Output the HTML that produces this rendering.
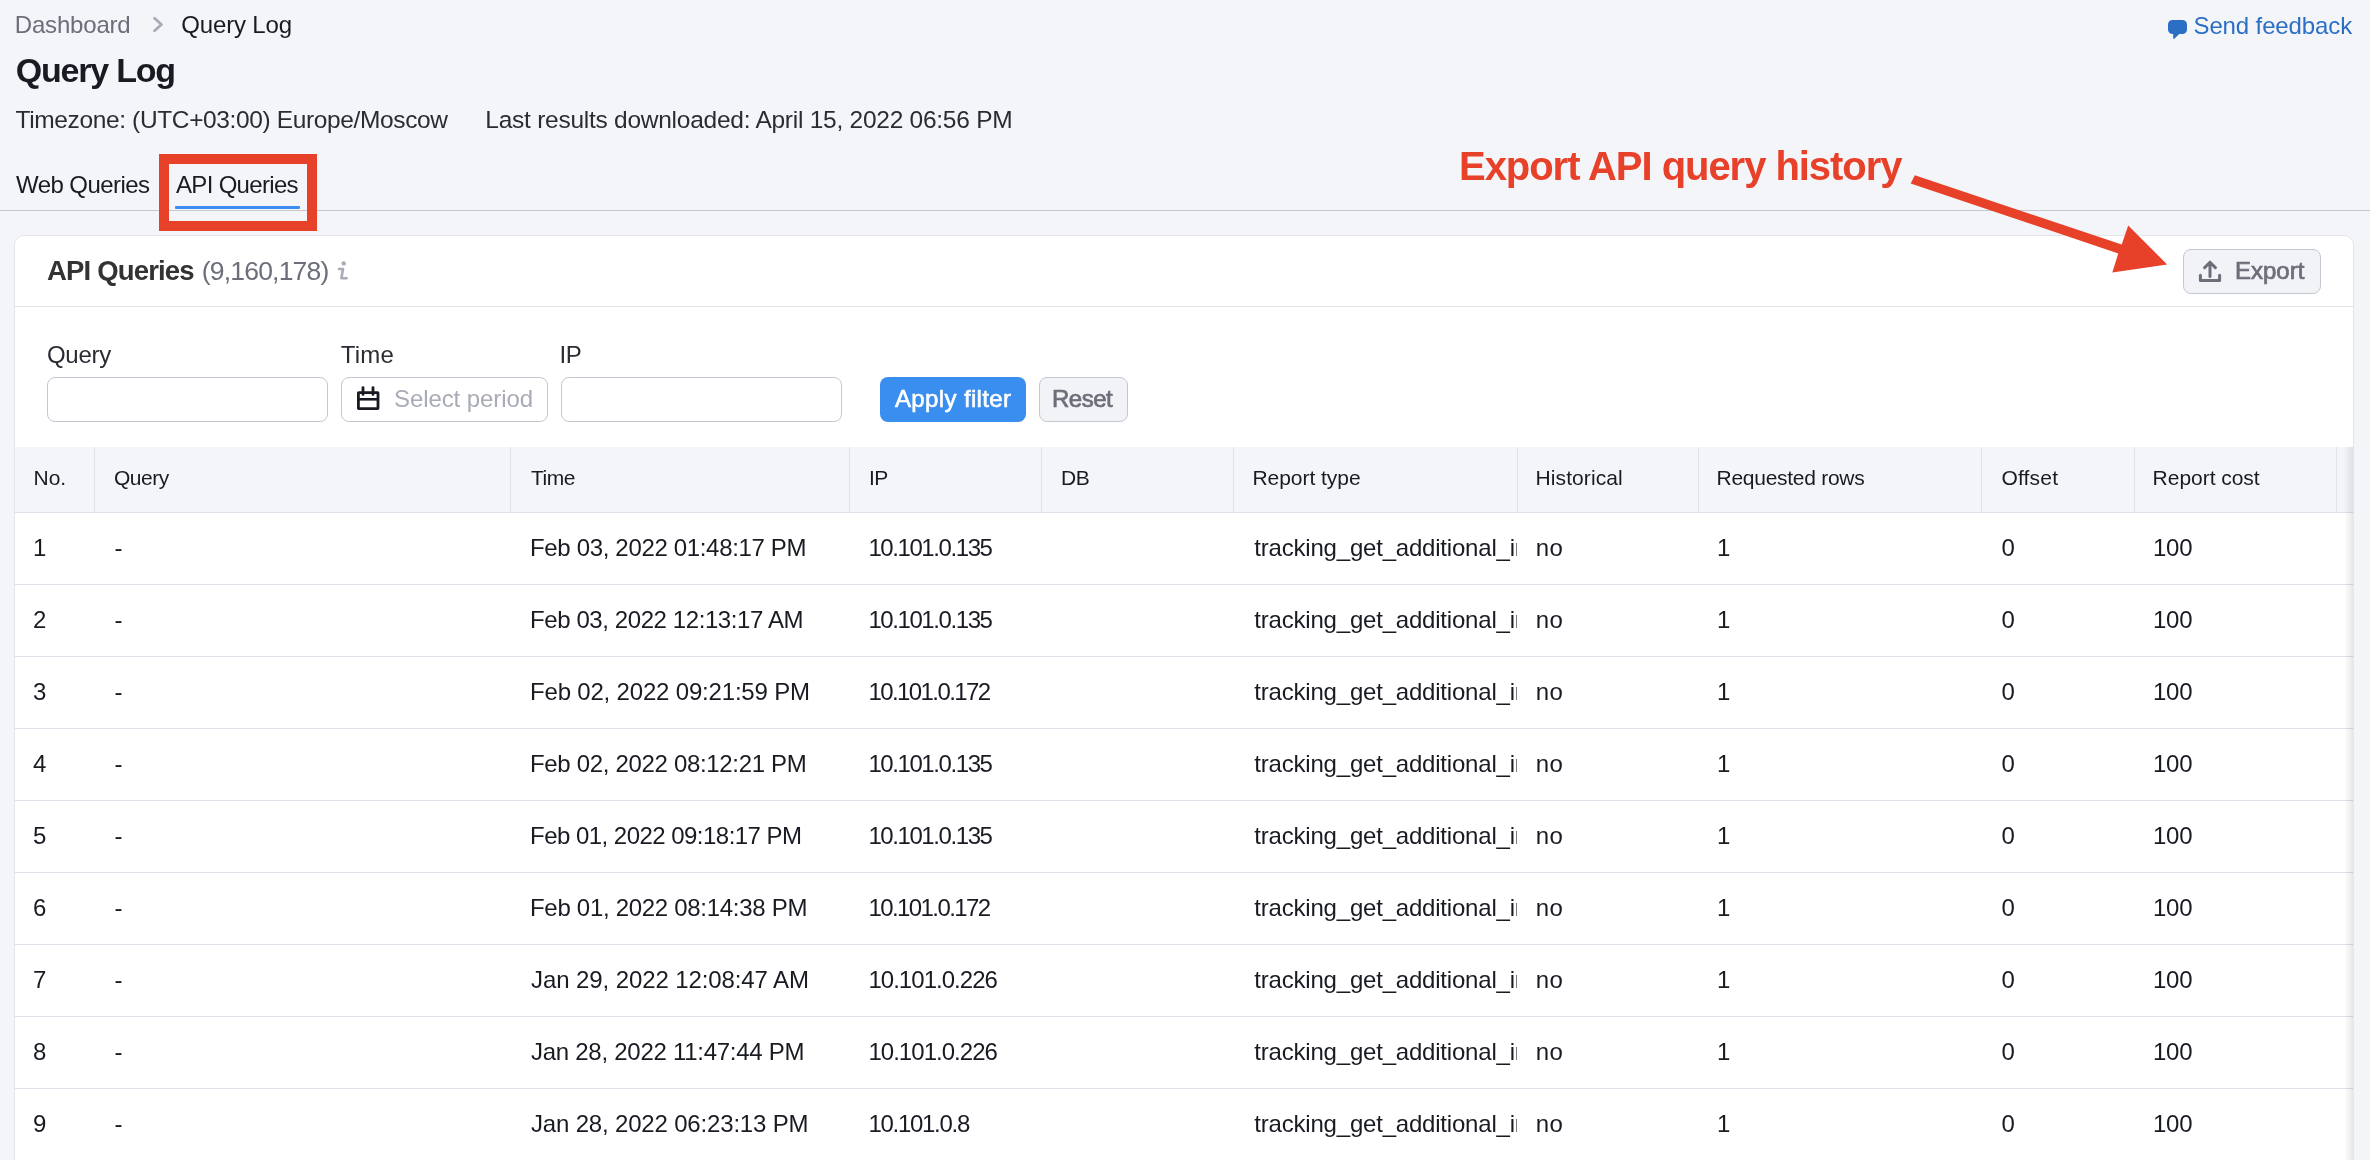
<!DOCTYPE html>
<html><head><meta charset="utf-8"><title>Query Log</title>
<style>
html,body{margin:0;padding:0;}
body{width:2370px;height:1160px;overflow:hidden;will-change:transform;background:#f4f5f9;font-family:"Liberation Sans",sans-serif;position:relative;}
.t{position:absolute;white-space:nowrap;-webkit-font-smoothing:antialiased;}
.b{position:absolute;box-sizing:border-box;}
svg{position:absolute;left:0;top:0;overflow:visible;}
</style></head><body>
<div class="t" style="left:14.8px;top:12.5px;font-size:24px;line-height:24px;color:#6c6e79;letter-spacing:-0.188px;">Dashboard</div>
<svg width="2370" height="1160" style="pointer-events:none"><polyline points="154.5,18.3 161.5,24.5 154.5,30.7" fill="none" stroke="#a9abb6" stroke-width="2.8" stroke-linecap="round" stroke-linejoin="round"/></svg>
<div class="t" style="left:181.3px;top:12.5px;font-size:24px;line-height:24px;color:#191b23;letter-spacing:-0.162px;">Query Log</div>
<div class="t" style="left:15.8px;top:53.1px;font-size:34px;line-height:34px;color:#191b23;font-weight:700;letter-spacing:-1.225px;">Query Log</div>
<div class="t" style="left:15.5px;top:108.3px;font-size:24.5px;line-height:24.5px;color:#2b2c33;letter-spacing:-0.368px;">Timezone: (UTC+03:00) Europe/Moscow</div>
<div class="t" style="left:485.3px;top:108.3px;font-size:24.5px;line-height:24.5px;color:#2b2c33;letter-spacing:-0.255px;">Last results downloaded: April 15, 2022 06:56 PM</div>
<svg width="2370" height="1160"><path d="M2172.5 20 H2182.5 A4.5 4.5 0 0 1 2187 24.5 V29.5 A4.5 4.5 0 0 1 2182.5 34 H2179.2 L2174.6 38.6 Q2173.2 39.6 2173.2 38 V34 H2172.5 A4.5 4.5 0 0 1 2168 29.5 V24.5 A4.5 4.5 0 0 1 2172.5 20 Z" fill="#2b6fc5"/></svg>
<div class="t" style="left:2193.5px;top:13.7px;font-size:24px;line-height:24px;color:#2b6fc5;letter-spacing:-0.125px;">Send feedback</div>
<div class="t" style="left:16.0px;top:172.7px;font-size:24px;line-height:24px;color:#191b23;letter-spacing:-0.56px;">Web Queries</div>
<div class="t" style="left:176.0px;top:172.7px;font-size:24px;line-height:24px;color:#191b23;letter-spacing:-0.68px;">API Queries</div>
<div class="b" style="left:0px;top:210px;width:2370px;height:1px;background:#c6c8ce;"></div>
<div class="b" style="left:175px;top:206px;width:125px;height:3px;background:#3a8cee;border-radius:1px;"></div>
<div class="b" style="left:14px;top:235px;width:2340px;height:965px;background:#fff;border:1px solid #e4e5ea;border-radius:10px;"></div>
<div class="b" style="left:15px;top:306px;width:2338px;height:1px;background:#e0e1e9;"></div>
<div class="t" style="left:47.1px;top:256.7px;font-size:27.5px;line-height:27.5px;color:#333333;font-weight:700;letter-spacing:-0.84px;">API Queries</div>
<div class="t" style="left:201.7px;top:257.6px;font-size:26.5px;line-height:26.5px;color:#6c6e79;letter-spacing:-0.79px;">(9,160,178)</div>
<svg width="2370" height="1160"><circle cx="343.7" cy="263.4" r="2.2" fill="#a9abb6"/><path d="M339 269 H343 L341.4 278.3 H346.6" fill="none" stroke="#a9abb6" stroke-width="2.6" stroke-linecap="round" stroke-linejoin="round"/></svg>
<div class="b" style="left:2183px;top:249px;width:138px;height:45px;background:#f2f3f6;border:1px solid #c4c7cf;border-radius:8px;"></div>
<svg width="2370" height="1160"><path d="M2210 276.5 V262.5 M2204.6 267.6 L2210 262.2 L2215.4 267.6 M2200.4 275.2 V280.6 H2219.6 V275.2" fill="none" stroke="#6c6e79" stroke-width="3" stroke-linecap="round" stroke-linejoin="round"/></svg>
<div class="t" style="left:2235.0px;top:258.7px;font-size:24px;line-height:24px;color:#6c6e79;-webkit-text-stroke:0.7px #6c6e79;">Export</div>
<div class="t" style="left:47.0px;top:342.7px;font-size:24px;line-height:24px;color:#2b2c33;letter-spacing:-0.3px;">Query</div>
<div class="t" style="left:340.8px;top:342.7px;font-size:24px;line-height:24px;color:#2b2c33;letter-spacing:0.2px;">Time</div>
<div class="t" style="left:559.5px;top:342.7px;font-size:24px;line-height:24px;color:#2b2c33;letter-spacing:-0.3px;">IP</div>
<div class="b" style="left:47px;top:377px;width:281px;height:45px;background:#fff;border:1px solid #c4c7cf;border-radius:8px;"></div>
<div class="b" style="left:341px;top:377px;width:207px;height:45px;background:#fff;border:1px solid #c4c7cf;border-radius:8px;"></div>
<div class="b" style="left:561px;top:377px;width:281px;height:45px;background:#fff;border:1px solid #c4c7cf;border-radius:8px;"></div>
<svg width="2370" height="1160"><rect x="358.4" y="392.6" width="19.6" height="16" rx="0.3" fill="none" stroke="#191b23" stroke-width="2.8"/><path d="M358.4 399.3 H377.8" stroke="#191b23" stroke-width="2.6"/><path d="M363 387.6 V394.4 M373 387.6 V394.4" stroke="#191b23" stroke-width="2.8" stroke-linecap="round"/></svg>
<div class="t" style="left:394.0px;top:386.7px;font-size:24px;line-height:24px;color:#a9abb6;letter-spacing:-0.083px;">Select period</div>
<div class="b" style="left:880px;top:377px;width:146px;height:45px;background:#3a8ef0;border-radius:8px;"></div>
<div class="t" style="left:895.0px;top:386.7px;font-size:24px;line-height:24px;color:#ffffff;letter-spacing:0.364px;-webkit-text-stroke:0.6px #ffffff;">Apply filter</div>
<div class="b" style="left:1039px;top:377px;width:89px;height:45px;background:#f2f3f6;border:1px solid #c4c7cf;border-radius:8px;"></div>
<div class="t" style="left:1052.0px;top:386.7px;font-size:24px;line-height:24px;color:#6c6e79;letter-spacing:-0.5px;-webkit-text-stroke:0.7px #6c6e79;">Reset</div>
<div class="b" style="left:15px;top:447px;width:2338px;height:65px;background:#f4f5f9;"></div>
<div class="b" style="left:15px;top:512px;width:2338px;height:1px;background:#e0e1e9;"></div>
<div class="b" style="left:94px;top:447px;width:1px;height:65px;background:#e0e1e9;"></div>
<div class="b" style="left:510px;top:447px;width:1px;height:65px;background:#e0e1e9;"></div>
<div class="b" style="left:849px;top:447px;width:1px;height:65px;background:#e0e1e9;"></div>
<div class="b" style="left:1041px;top:447px;width:1px;height:65px;background:#e0e1e9;"></div>
<div class="b" style="left:1233px;top:447px;width:1px;height:65px;background:#e0e1e9;"></div>
<div class="b" style="left:1517px;top:447px;width:1px;height:65px;background:#e0e1e9;"></div>
<div class="b" style="left:1698px;top:447px;width:1px;height:65px;background:#e0e1e9;"></div>
<div class="b" style="left:1981px;top:447px;width:1px;height:65px;background:#e0e1e9;"></div>
<div class="b" style="left:2134px;top:447px;width:1px;height:65px;background:#e0e1e9;"></div>
<div class="b" style="left:2336px;top:447px;width:1px;height:65px;background:#e0e1e9;"></div>
<div class="t" style="left:33.5px;top:467.2px;font-size:21px;line-height:21px;color:#191b23;">No.</div>
<div class="t" style="left:114.0px;top:467.2px;font-size:21px;line-height:21px;color:#191b23;letter-spacing:-0.5px;">Query</div>
<div class="t" style="left:531.0px;top:467.2px;font-size:21px;line-height:21px;color:#191b23;letter-spacing:-0.5px;">Time</div>
<div class="t" style="left:869.0px;top:467.2px;font-size:21px;line-height:21px;color:#191b23;letter-spacing:-0.5px;">IP</div>
<div class="t" style="left:1061.0px;top:467.2px;font-size:21px;line-height:21px;color:#191b23;letter-spacing:-0.5px;">DB</div>
<div class="t" style="left:1252.5px;top:467.2px;font-size:21px;line-height:21px;color:#191b23;letter-spacing:-0.05px;">Report type</div>
<div class="t" style="left:1535.5px;top:467.2px;font-size:21px;line-height:21px;color:#191b23;letter-spacing:0.1px;">Historical</div>
<div class="t" style="left:1716.5px;top:467.2px;font-size:21px;line-height:21px;color:#191b23;letter-spacing:-0.269px;">Requested rows</div>
<div class="t" style="left:2001.4px;top:467.2px;font-size:21px;line-height:21px;color:#191b23;letter-spacing:0.2px;">Offset</div>
<div class="t" style="left:2152.6px;top:467.2px;font-size:21px;line-height:21px;color:#191b23;letter-spacing:-0.03px;">Report cost</div>
<div class="t" style="left:33.0px;top:535.7px;font-size:24px;line-height:24px;color:#191b23;">1</div>
<div class="t" style="left:114.5px;top:535.7px;font-size:24px;line-height:24px;color:#191b23;">-</div>
<div class="t" style="left:530.0px;top:535.7px;font-size:24px;line-height:24px;color:#191b23;letter-spacing:-0.335px;">Feb 03, 2022 01:48:17 PM</div>
<div class="t" style="left:868.4px;top:535.7px;font-size:24px;line-height:24px;color:#191b23;letter-spacing:-1.418px;">10.101.0.135</div>
<div class="b" style="left:1254px;top:527.7px;width:263px;height:40px;overflow:hidden"><div class="t" style="left:0.3px;top:8px;font-size:24px;line-height:24px;color:#191b23;letter-spacing:-0.2px">tracking_get_additional_info</div></div>
<div class="t" style="left:1535.8px;top:535.7px;font-size:24px;line-height:24px;color:#191b23;letter-spacing:0.3px;">no</div>
<div class="t" style="left:1717.0px;top:535.7px;font-size:24px;line-height:24px;color:#191b23;">1</div>
<div class="t" style="left:2001.5px;top:535.7px;font-size:24px;line-height:24px;color:#191b23;">0</div>
<div class="t" style="left:2153.0px;top:535.7px;font-size:24px;line-height:24px;color:#191b23;letter-spacing:-0.25px;">100</div>
<div class="b" style="left:15px;top:584px;width:2338px;height:1px;background:#e0e1e9;"></div>
<div class="t" style="left:33.0px;top:607.7px;font-size:24px;line-height:24px;color:#191b23;">2</div>
<div class="t" style="left:114.5px;top:607.7px;font-size:24px;line-height:24px;color:#191b23;">-</div>
<div class="t" style="left:530.0px;top:607.7px;font-size:24px;line-height:24px;color:#191b23;letter-spacing:-0.409px;">Feb 03, 2022 12:13:17 AM</div>
<div class="t" style="left:868.4px;top:607.7px;font-size:24px;line-height:24px;color:#191b23;letter-spacing:-1.418px;">10.101.0.135</div>
<div class="b" style="left:1254px;top:599.7px;width:263px;height:40px;overflow:hidden"><div class="t" style="left:0.3px;top:8px;font-size:24px;line-height:24px;color:#191b23;letter-spacing:-0.2px">tracking_get_additional_info</div></div>
<div class="t" style="left:1535.8px;top:607.7px;font-size:24px;line-height:24px;color:#191b23;letter-spacing:0.3px;">no</div>
<div class="t" style="left:1717.0px;top:607.7px;font-size:24px;line-height:24px;color:#191b23;">1</div>
<div class="t" style="left:2001.5px;top:607.7px;font-size:24px;line-height:24px;color:#191b23;">0</div>
<div class="t" style="left:2153.0px;top:607.7px;font-size:24px;line-height:24px;color:#191b23;letter-spacing:-0.25px;">100</div>
<div class="b" style="left:15px;top:656px;width:2338px;height:1px;background:#e0e1e9;"></div>
<div class="t" style="left:33.0px;top:679.7px;font-size:24px;line-height:24px;color:#191b23;">3</div>
<div class="t" style="left:114.5px;top:679.7px;font-size:24px;line-height:24px;color:#191b23;">-</div>
<div class="t" style="left:530.0px;top:679.7px;font-size:24px;line-height:24px;color:#191b23;letter-spacing:-0.183px;">Feb 02, 2022 09:21:59 PM</div>
<div class="t" style="left:868.4px;top:679.7px;font-size:24px;line-height:24px;color:#191b23;letter-spacing:-1.582px;">10.101.0.172</div>
<div class="b" style="left:1254px;top:671.7px;width:263px;height:40px;overflow:hidden"><div class="t" style="left:0.3px;top:8px;font-size:24px;line-height:24px;color:#191b23;letter-spacing:-0.2px">tracking_get_additional_info</div></div>
<div class="t" style="left:1535.8px;top:679.7px;font-size:24px;line-height:24px;color:#191b23;letter-spacing:0.3px;">no</div>
<div class="t" style="left:1717.0px;top:679.7px;font-size:24px;line-height:24px;color:#191b23;">1</div>
<div class="t" style="left:2001.5px;top:679.7px;font-size:24px;line-height:24px;color:#191b23;">0</div>
<div class="t" style="left:2153.0px;top:679.7px;font-size:24px;line-height:24px;color:#191b23;letter-spacing:-0.25px;">100</div>
<div class="b" style="left:15px;top:728px;width:2338px;height:1px;background:#e0e1e9;"></div>
<div class="t" style="left:33.0px;top:751.7px;font-size:24px;line-height:24px;color:#191b23;">4</div>
<div class="t" style="left:114.5px;top:751.7px;font-size:24px;line-height:24px;color:#191b23;">-</div>
<div class="t" style="left:530.0px;top:751.7px;font-size:24px;line-height:24px;color:#191b23;letter-spacing:-0.326px;">Feb 02, 2022 08:12:21 PM</div>
<div class="t" style="left:868.4px;top:751.7px;font-size:24px;line-height:24px;color:#191b23;letter-spacing:-1.418px;">10.101.0.135</div>
<div class="b" style="left:1254px;top:743.7px;width:263px;height:40px;overflow:hidden"><div class="t" style="left:0.3px;top:8px;font-size:24px;line-height:24px;color:#191b23;letter-spacing:-0.2px">tracking_get_additional_info</div></div>
<div class="t" style="left:1535.8px;top:751.7px;font-size:24px;line-height:24px;color:#191b23;letter-spacing:0.3px;">no</div>
<div class="t" style="left:1717.0px;top:751.7px;font-size:24px;line-height:24px;color:#191b23;">1</div>
<div class="t" style="left:2001.5px;top:751.7px;font-size:24px;line-height:24px;color:#191b23;">0</div>
<div class="t" style="left:2153.0px;top:751.7px;font-size:24px;line-height:24px;color:#191b23;letter-spacing:-0.25px;">100</div>
<div class="b" style="left:15px;top:800px;width:2338px;height:1px;background:#e0e1e9;"></div>
<div class="t" style="left:33.0px;top:823.7px;font-size:24px;line-height:24px;color:#191b23;">5</div>
<div class="t" style="left:114.5px;top:823.7px;font-size:24px;line-height:24px;color:#191b23;">-</div>
<div class="t" style="left:530.0px;top:823.7px;font-size:24px;line-height:24px;color:#191b23;letter-spacing:-0.53px;">Feb 01, 2022 09:18:17 PM</div>
<div class="t" style="left:868.4px;top:823.7px;font-size:24px;line-height:24px;color:#191b23;letter-spacing:-1.418px;">10.101.0.135</div>
<div class="b" style="left:1254px;top:815.7px;width:263px;height:40px;overflow:hidden"><div class="t" style="left:0.3px;top:8px;font-size:24px;line-height:24px;color:#191b23;letter-spacing:-0.2px">tracking_get_additional_info</div></div>
<div class="t" style="left:1535.8px;top:823.7px;font-size:24px;line-height:24px;color:#191b23;letter-spacing:0.3px;">no</div>
<div class="t" style="left:1717.0px;top:823.7px;font-size:24px;line-height:24px;color:#191b23;">1</div>
<div class="t" style="left:2001.5px;top:823.7px;font-size:24px;line-height:24px;color:#191b23;">0</div>
<div class="t" style="left:2153.0px;top:823.7px;font-size:24px;line-height:24px;color:#191b23;letter-spacing:-0.25px;">100</div>
<div class="b" style="left:15px;top:872px;width:2338px;height:1px;background:#e0e1e9;"></div>
<div class="t" style="left:33.0px;top:895.7px;font-size:24px;line-height:24px;color:#191b23;">6</div>
<div class="t" style="left:114.5px;top:895.7px;font-size:24px;line-height:24px;color:#191b23;">-</div>
<div class="t" style="left:530.0px;top:895.7px;font-size:24px;line-height:24px;color:#191b23;letter-spacing:-0.296px;">Feb 01, 2022 08:14:38 PM</div>
<div class="t" style="left:868.4px;top:895.7px;font-size:24px;line-height:24px;color:#191b23;letter-spacing:-1.582px;">10.101.0.172</div>
<div class="b" style="left:1254px;top:887.7px;width:263px;height:40px;overflow:hidden"><div class="t" style="left:0.3px;top:8px;font-size:24px;line-height:24px;color:#191b23;letter-spacing:-0.2px">tracking_get_additional_info</div></div>
<div class="t" style="left:1535.8px;top:895.7px;font-size:24px;line-height:24px;color:#191b23;letter-spacing:0.3px;">no</div>
<div class="t" style="left:1717.0px;top:895.7px;font-size:24px;line-height:24px;color:#191b23;">1</div>
<div class="t" style="left:2001.5px;top:895.7px;font-size:24px;line-height:24px;color:#191b23;">0</div>
<div class="t" style="left:2153.0px;top:895.7px;font-size:24px;line-height:24px;color:#191b23;letter-spacing:-0.25px;">100</div>
<div class="b" style="left:15px;top:944px;width:2338px;height:1px;background:#e0e1e9;"></div>
<div class="t" style="left:33.0px;top:967.7px;font-size:24px;line-height:24px;color:#191b23;">7</div>
<div class="t" style="left:114.5px;top:967.7px;font-size:24px;line-height:24px;color:#191b23;">-</div>
<div class="t" style="left:531.0px;top:967.7px;font-size:24px;line-height:24px;color:#191b23;letter-spacing:-0.096px;">Jan 29, 2022 12:08:47 AM</div>
<div class="t" style="left:868.4px;top:967.7px;font-size:24px;line-height:24px;color:#191b23;letter-spacing:-0.964px;">10.101.0.226</div>
<div class="b" style="left:1254px;top:959.7px;width:263px;height:40px;overflow:hidden"><div class="t" style="left:0.3px;top:8px;font-size:24px;line-height:24px;color:#191b23;letter-spacing:-0.2px">tracking_get_additional_info</div></div>
<div class="t" style="left:1535.8px;top:967.7px;font-size:24px;line-height:24px;color:#191b23;letter-spacing:0.3px;">no</div>
<div class="t" style="left:1717.0px;top:967.7px;font-size:24px;line-height:24px;color:#191b23;">1</div>
<div class="t" style="left:2001.5px;top:967.7px;font-size:24px;line-height:24px;color:#191b23;">0</div>
<div class="t" style="left:2153.0px;top:967.7px;font-size:24px;line-height:24px;color:#191b23;letter-spacing:-0.25px;">100</div>
<div class="b" style="left:15px;top:1016px;width:2338px;height:1px;background:#e0e1e9;"></div>
<div class="t" style="left:33.0px;top:1039.7px;font-size:24px;line-height:24px;color:#191b23;">8</div>
<div class="t" style="left:114.5px;top:1039.7px;font-size:24px;line-height:24px;color:#191b23;">-</div>
<div class="t" style="left:531.0px;top:1039.7px;font-size:24px;line-height:24px;color:#191b23;letter-spacing:-0.27px;">Jan 28, 2022 11:47:44 PM</div>
<div class="t" style="left:868.4px;top:1039.7px;font-size:24px;line-height:24px;color:#191b23;letter-spacing:-0.964px;">10.101.0.226</div>
<div class="b" style="left:1254px;top:1031.7px;width:263px;height:40px;overflow:hidden"><div class="t" style="left:0.3px;top:8px;font-size:24px;line-height:24px;color:#191b23;letter-spacing:-0.2px">tracking_get_additional_info</div></div>
<div class="t" style="left:1535.8px;top:1039.7px;font-size:24px;line-height:24px;color:#191b23;letter-spacing:0.3px;">no</div>
<div class="t" style="left:1717.0px;top:1039.7px;font-size:24px;line-height:24px;color:#191b23;">1</div>
<div class="t" style="left:2001.5px;top:1039.7px;font-size:24px;line-height:24px;color:#191b23;">0</div>
<div class="t" style="left:2153.0px;top:1039.7px;font-size:24px;line-height:24px;color:#191b23;letter-spacing:-0.25px;">100</div>
<div class="b" style="left:15px;top:1088px;width:2338px;height:1px;background:#e0e1e9;"></div>
<div class="t" style="left:33.0px;top:1111.7px;font-size:24px;line-height:24px;color:#191b23;">9</div>
<div class="t" style="left:114.5px;top:1111.7px;font-size:24px;line-height:24px;color:#191b23;">-</div>
<div class="t" style="left:531.0px;top:1111.7px;font-size:24px;line-height:24px;color:#191b23;letter-spacing:-0.174px;">Jan 28, 2022 06:23:13 PM</div>
<div class="t" style="left:868.4px;top:1111.7px;font-size:24px;line-height:24px;color:#191b23;letter-spacing:-1.289px;">10.101.0.8</div>
<div class="b" style="left:1254px;top:1103.7px;width:263px;height:40px;overflow:hidden"><div class="t" style="left:0.3px;top:8px;font-size:24px;line-height:24px;color:#191b23;letter-spacing:-0.2px">tracking_get_additional_info</div></div>
<div class="t" style="left:1535.8px;top:1111.7px;font-size:24px;line-height:24px;color:#191b23;letter-spacing:0.3px;">no</div>
<div class="t" style="left:1717.0px;top:1111.7px;font-size:24px;line-height:24px;color:#191b23;">1</div>
<div class="t" style="left:2001.5px;top:1111.7px;font-size:24px;line-height:24px;color:#191b23;">0</div>
<div class="t" style="left:2153.0px;top:1111.7px;font-size:24px;line-height:24px;color:#191b23;letter-spacing:-0.25px;">100</div>
<div class="b" style="left:2344px;top:447px;width:9px;height:713px;background:linear-gradient(to right, rgba(0,0,0,0), rgba(0,0,0,0.09));"></div>
<div class="t" style="left:1459.0px;top:146.1px;font-size:40px;line-height:40px;color:#e8412a;font-weight:700;letter-spacing:-1.043px;">Export API query history</div>
<div class="b" style="left:159px;top:154px;width:158px;height:77px;border:10px solid #e8412a;"></div>
<svg width="2370" height="1160"><polygon points="1914.8,175.2 2121.7,244.5 2128.2,225.6 2167.2,264.5 2112.3,272.5 2118.3,253.4 1910.7,183.5" fill="#e8412a"/></svg>
</body></html>
